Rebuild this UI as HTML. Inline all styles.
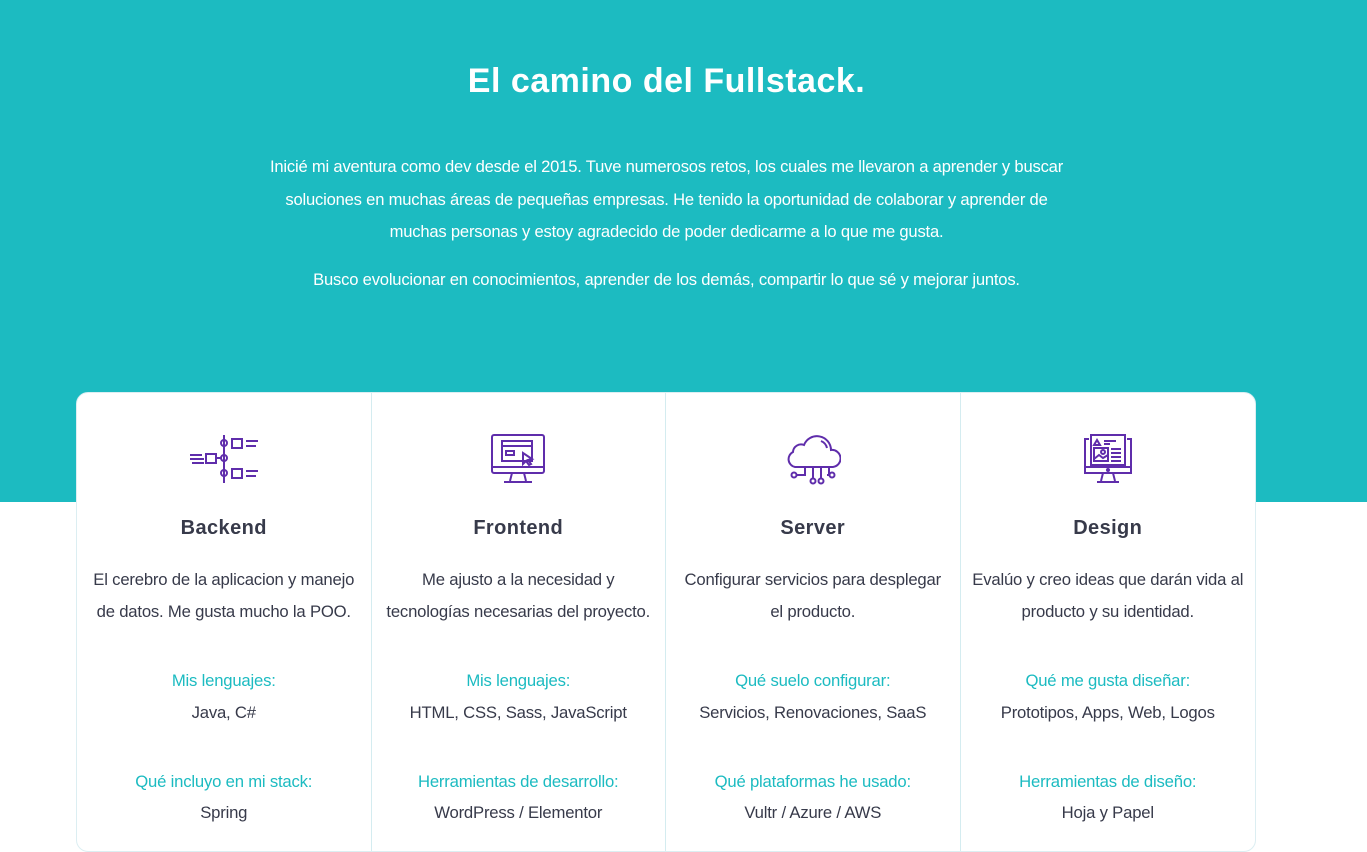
<!DOCTYPE html>
<html><head><meta charset="utf-8"><style>
*{margin:0;padding:0;box-sizing:border-box}
body{width:1367px;height:823px;overflow:hidden;background:#fff;font-family:"Liberation Sans",sans-serif;color:#373a4a;position:relative}
.hero{position:absolute;left:0;top:0;width:1367px;height:502px;background:#1cbbc1}
h1{position:absolute;top:62px;left:0;width:1333px;text-align:center;color:#fff;font-size:34px;font-weight:bold;letter-spacing:0.5px}
.intro{position:absolute;top:151px;left:0;width:1333px;text-align:center;color:#fff;font-size:16.6px;line-height:32.5px;letter-spacing:-0.2px}
.card{position:absolute;left:76px;top:392px;width:1180px;height:460px;background:#fff;border-radius:12px;display:flex;border:1px solid #dceef2}
.col{width:295px;border-right:1px solid #d4ecf0;text-align:center;position:relative}
.col:last-child{border-right:none}
.ic{position:absolute;top:40px;left:50%;transform:translateX(-50%)}
h3{position:absolute;top:124px;width:100%;font-size:20px;font-weight:bold;letter-spacing:0.4px}
.p{position:absolute;top:171px;width:100%;font-size:16.7px;line-height:32px;letter-spacing:-0.2px}
.l{position:absolute;width:100%;font-size:16.7px;color:#1cbbc1;letter-spacing:-0.2px}
.v{position:absolute;width:100%;font-size:16.7px;letter-spacing:-0.2px}
svg{stroke:#5f2dab;fill:none;stroke-width:2}
</style></head><body>
<div class="hero"></div>
<h1>El camino del Fullstack.</h1>
<div class="intro">Inicié mi aventura como dev desde el 2015. Tuve numerosos retos, los cuales me llevaron a aprender y buscar<br>soluciones en muchas áreas de pequeñas empresas. He tenido la oportunidad de colaborar y aprender de<br>muchas personas y estoy agradecido de poder dedicarme a lo que me gusta.<div style="height:15px"></div>Busco evolucionar en conocimientos, aprender de los demás, compartir lo que sé y mejorar juntos.</div>
<div class="card">
<div class="col">
<svg class="ic" width="72" height="52" viewBox="0 0 72 52"><path d="M36 2V50"/><circle cx="36" cy="10" r="3"/><circle cx="36" cy="25" r="3"/><circle cx="36" cy="40" r="3"/><rect x="44" y="6" width="10" height="9"/><path d="M58 8h12M58 13h10"/><rect x="44" y="36" width="10" height="9"/><path d="M58 38h12M58 43h10"/><rect x="18" y="21" width="10" height="9"/><path d="M28 25h5M2 22h12M2 26h14M4 30h12"/></svg>
<h3>Backend</h3>
<div class="p">El cerebro de la aplicacion y manejo<br>de datos. Me gusta mucho la POO.</div>
<div class="l" style="top:278px">Mis lenguajes:</div><div class="v" style="top:310px">Java, C#</div>
<div class="l" style="top:379px">Qué incluyo en mi stack:</div><div class="v" style="top:410px">Spring</div>
</div>
<div class="col">
<svg class="ic" width="56" height="52" viewBox="0 0 56 52"><rect x="2" y="2" width="52" height="38" rx="2"/><path d="M2 34h52M22 40l-2 8M34 40l2 8M14 49h28"/><rect x="12" y="8" width="30" height="20"/><path d="M12 13h30"/><rect x="16" y="18" width="8" height="4"/><path d="M33 20l9 6-4 1 3 4-2 1-3-4-3 3z"/></svg>
<h3>Frontend</h3>
<div class="p">Me ajusto a la necesidad y<br>tecnologías necesarias del proyecto.</div>
<div class="l" style="top:278px">Mis lenguajes:</div><div class="v" style="top:310px">HTML, CSS, Sass, JavaScript</div>
<div class="l" style="top:379px">Herramientas de desarrollo:</div><div class="v" style="top:410px">WordPress / Elementor</div>
</div>
<div class="col">
<svg class="ic" width="56" height="54" viewBox="0 0 56 54"><path d="M12 34H10a8 8 0 0 1-2-15 8 8 0 0 1 11-7 14 14 0 0 1 27 5 8 8 0 0 1 2 17H12z"/><path d="M36 8a10 10 0 0 1 6 7"/><path d="M20 34v8h-8M28 34v12M36 34v12M44 34v8h-2"/><circle cx="9" cy="42" r="2.5"/><circle cx="28" cy="48" r="2.5"/><circle cx="36" cy="48" r="2.5"/><circle cx="47" cy="42" r="2.5"/></svg>
<h3>Server</h3>
<div class="p">Configurar servicios para desplegar<br>el producto.</div>
<div class="l" style="top:278px">Qué suelo configurar:</div><div class="v" style="top:310px">Servicios, Renovaciones, SaaS</div>
<div class="l" style="top:379px">Qué plataformas he usado:</div><div class="v" style="top:410px">Vultr / Azure / AWS</div>
</div>
<div class="col">
<svg class="ic" width="54" height="54" viewBox="0 0 54 54"><path d="M8 6H4v34h46V6h-4M4 34h46M22 40l-2 8M32 40l2 8M16 49h22"/><rect x="10" y="2" width="34" height="30"/><path d="M13 12l3-5 3 5zM23 8h12M23 11h6"/><rect x="13" y="15" width="14" height="13"/><circle cx="22" cy="19" r="2"/><path d="M13 26l5-4 4 3 5-3M30 16h10M30 20h10M30 24h10M30 28h10"/><circle cx="27" cy="37" r="1"/></svg>
<h3>Design</h3>
<div class="p">Evalúo y creo ideas que darán vida al<br>producto y su identidad.</div>
<div class="l" style="top:278px">Qué me gusta diseñar:</div><div class="v" style="top:310px">Prototipos, Apps, Web, Logos</div>
<div class="l" style="top:379px">Herramientas de diseño:</div><div class="v" style="top:410px">Hoja y Papel</div>
</div>
</div>
</body></html>
